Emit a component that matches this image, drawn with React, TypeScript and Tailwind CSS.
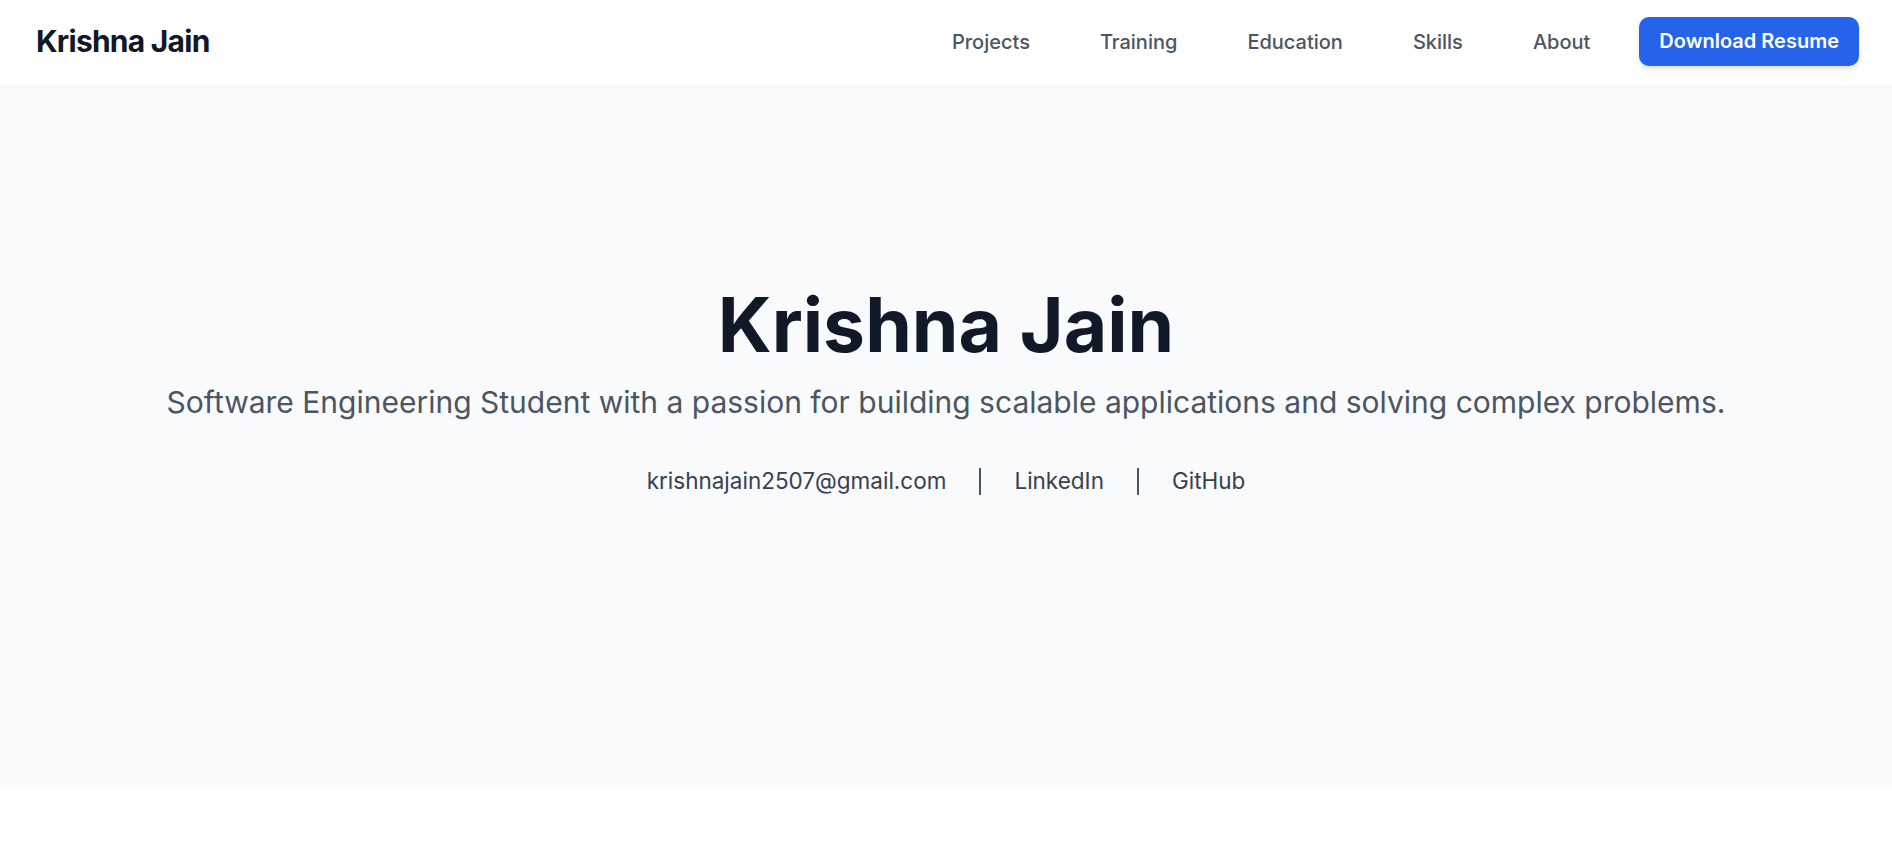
import React from "react";

const navLinks = ["Projects", "Training", "Education", "Skills", "About"];

function Navbar() {
  return (
    <nav className="h-[87px] bg-white border-b border-gray-100 shadow-sm">
      <div className="h-full pl-9 pr-[33px] pb-[3px] flex items-center justify-between">
        <a href="#" className="text-[30px] leading-[45px] font-bold text-[#111827] tracking-tight">
          Krishna Jain
        </a>
        <div className="flex items-center">
          <div className="flex items-center gap-[70px]">
            {navLinks.map((link) => (
              <a
                key={link}
                href={`#${link.toLowerCase()}`}
                className="text-[20px] leading-[30px] font-medium text-[#4b5563] hover:text-[#2563eb]"
              >
                {link}
              </a>
            ))}
          </div>
          <a
            href="#"
            className="ml-[49px] px-5 py-[10px] rounded-[10px] bg-[#2563eb] text-white text-[20px] leading-[29px] font-semibold shadow-md hover:bg-[#1d4ed8]"
          >
            Download Resume
          </a>
        </div>
      </div>
    </nav>
  );
}

function Hero() {
  return (
    <section className="h-[700px] bg-[#f9fafb] pt-[200px] text-center">
      <h1 className="text-[75px] leading-[75px] font-bold text-[#111827]">
        Krishna Jain
      </h1>
      <p className="mt-5 text-[30px] leading-[40px] text-[#4b5563]">
        Software Engineering Student with a passion for building scalable
        applications and solving complex problems.
      </p>
      <div className="mt-[44px] flex justify-center items-center gap-[33px] text-[22.5px] leading-[30px] text-[#374151]">
        <a href="mailto:krishnajain2507@gmail.com" className="hover:text-[#2563eb]">
          krishnajain2507@gmail.com
        </a>
        <span className="w-[2px] h-[27px] bg-[#4b5563]" />
        <a href="#" className="hover:text-[#2563eb]">
          LinkedIn
        </a>
        <span className="w-[2px] h-[27px] bg-[#4b5563]" />
        <a href="#" className="hover:text-[#2563eb]">
          GitHub
        </a>
      </div>
    </section>
  );
}

export default function App() {
  return (
    <div className="min-h-screen bg-white font-['Inter',sans-serif]">
      <Navbar />
      <Hero />
    </div>
  );
}
